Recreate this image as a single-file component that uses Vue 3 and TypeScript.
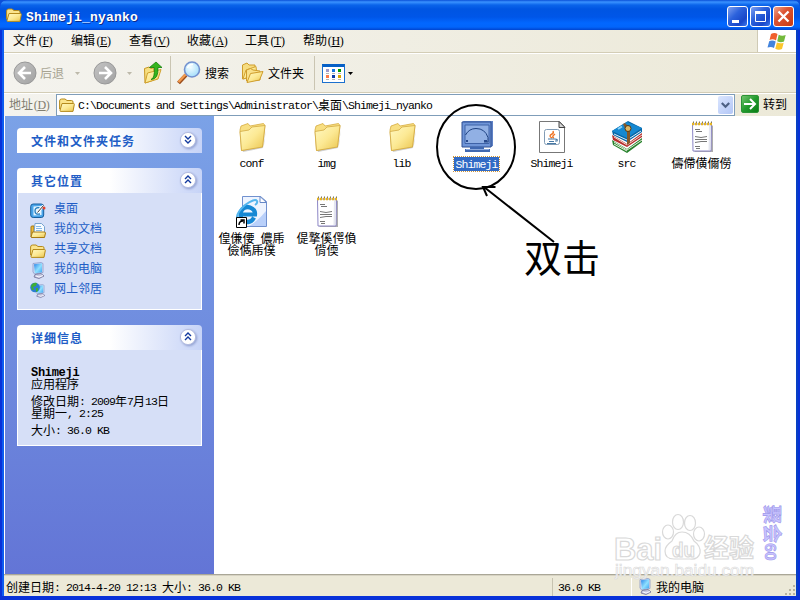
<script setup lang="ts">
import { h, type FunctionalComponent } from 'vue'

// Splits a label into half-width and full-width runs so both keep a fixed pitch.
const Mix: FunctionalComponent<{ t: string }> = (props) =>
  h(
    'span',
    { class: 'mix' },
    (props.t.match(/[\x20-\x7e]+|[^\x20-\x7e]+/g) ?? []).map((run) =>
      h('span', { class: run.charCodeAt(0) < 127 ? 'half' : 'full' }, run),
    ),
  )
Mix.props = ['t']

interface Menu { label: string; key: string }
const menus: Menu[] = [
  { label: '文件', key: 'F' },
  { label: '编辑', key: 'E' },
  { label: '查看', key: 'V' },
  { label: '收藏', key: 'A' },
  { label: '工具', key: 'T' },
  { label: '帮助', key: 'H' },
]

interface Place { label: string; icon: string }
const places: Place[] = [
  { label: '桌面', icon: 'desktop' },
  { label: '我的文档', icon: 'docs' },
  { label: '共享文档', icon: 'shared' },
  { label: '我的电脑', icon: 'computer' },
  { label: '网上邻居', icon: 'network' },
]

interface FileItem { lines: string[]; icon: string; selected?: boolean }
const files: FileItem[] = [
  { lines: ['conf'], icon: 'folder' },
  { lines: ['img'], icon: 'folder' },
  { lines: ['lib'], icon: 'folder' },
  { lines: ['Shimeji'], icon: 'app', selected: true },
  { lines: ['Shimeji'], icon: 'jar' },
  { lines: ['src'], icon: 'rar' },
  { lines: ['儔僀僙儞僗'], icon: 'note' },
  { lines: ['偟傔偠 儂乕', '儉儁乕僕'], icon: 'link' },
  { lines: ['偍撉傒偔偩', '偝偄'], icon: 'note' },
]
const viewDots = ['#a39ac9', '#1276e0', '#009a00', '#ff7a48', '#0a3aa8', '#d9a400']
</script>

<template>
  <div class="window">
    <svg class="defs" width="0" height="0">
      <defs>
        <linearGradient id="gold" x1="0" y1="0" x2="1" y2="1">
          <stop offset="0" stop-color="#fff9c4" /><stop offset=".5" stop-color="#fce994" /><stop offset="1" stop-color="#eac44c" />
        </linearGradient>
        <linearGradient id="screen" x1="0" y1="0" x2="1" y2="1">
          <stop offset="0" stop-color="#2c83e8" /><stop offset=".55" stop-color="#8fe0ff" /><stop offset="1" stop-color="#3ba3f2" />
        </linearGradient>
        <radialGradient id="lens" cx=".4" cy=".35" r=".7">
          <stop offset="0" stop-color="#f4fdff" /><stop offset="1" stop-color="#a0dcfa" />
        </radialGradient>
        <linearGradient id="grey" x1="0" y1="0" x2="1" y2="1">
          <stop offset="0" stop-color="#c4c4c4" /><stop offset="1" stop-color="#a2a2a2" />
        </linearGradient>
        <symbol id="smallFolder" viewBox="0 0 16 14">
          <path d="M.6 11V3q0-2 2-2H6l2 1.500h4.500q1.500 0 1.500 1.500v7z" fill="#fbe48c" stroke="#b58a1c" />
          <path d="M1 12.500 3 5.500H14.500q1 0 .8 1L14 13.400H2q-1.200 0-1-.9z" fill="url(#gold)" stroke="#b58a1c" />
        </symbol>
        <symbol id="computer" viewBox="0 0 16 17">
          <path d="m3 1.500 8-1 2 1v9l-8.500 1.500L3 10z" fill="#d4dcf1" stroke="#7f91c4" stroke-width=".7" />
          <path d="m4 2.300 8-1v9l-7.200 1z" fill="url(#screen)" />
          <path d="m5 12.500 6-1 3 2.500-5 2.500-5-1.500z" fill="#c7c8e0" stroke="#6e6f96" stroke-width=".8" />
          <path d="m6 14 3 1 4-1.500" stroke="#f7f7ff" fill="none" />
        </symbol>
      </defs>
    </svg>

    <header class="title">
      <svg width="16" height="14"><use href="#smallFolder" /></svg>
      <h1><Mix t="Shimeji_nyanko" /></h1>
      <div class="controls">
        <span class="ctl"><svg width="19" height="19"><path d="M4 13h7v3H4z" fill="#fff" /></svg></span>
        <span class="ctl"><svg width="19" height="19"><path d="M4.500 5.500h10v9h-10z" fill="none" stroke="#fff" /><path d="M4 4h11v3H4z" fill="#fff" /></svg></span>
        <span class="ctl close"><svg width="19" height="19"><path d="m4.500 4.500 10 10m0-10-10 10" stroke="#fff" stroke-width="2.300" /></svg></span>
      </div>
    </header>

    <div class="frame">
      <nav class="menubar">
        <span v-for="m in menus" :key="m.key" class="menu">{{ m.label }}<span class="key">(<u>{{ m.key }}</u>)</span></span>
        <span class="flag">
          <svg width="20" height="19" viewBox="0 0 20 19">
            <path d="M4 2q3.500-2 6.500 0L9 8.500q-3-2-6.500-.5z" fill="#f0602c" />
            <path d="M11.700 2.800q3.300 1.700 7 .2L17 9.500q-3.300 1.500-6.800-.2z" fill="#73b93c" />
            <path d="M2.200 9.200q3-1.600 6.500.3L7 16Q4 14 .5 15.600z" fill="#4384dd" />
            <path d="M9.900 10.500q3.300 1.500 6.800.2L15 17q-3.500 1.500-6.700-.3z" fill="#fbc62c" />
          </svg>
        </span>
      </nav>

      <div class="toolbar">
        <svg class="back" width="24" height="24"><circle cx="12" cy="12" r="11" fill="url(#grey)" stroke="#989898" /><path d="m12 6-6 6 6 6M6.500 12H18" fill="none" stroke="#fff" stroke-width="2.600" /></svg>
        <span class="dim">后退</span>
        <svg class="tri tri1" width="5" height="3"><path d="M0 0h5L2.500 3z" fill="#bdb9aa" /></svg>
        <svg width="24" height="24"><circle cx="12" cy="12" r="11" fill="url(#grey)" stroke="#989898" /><path d="m12 6 6 6-6 6M17.500 12H6" fill="none" stroke="#fff" stroke-width="2.600" /></svg>
        <svg class="tri tri2" width="5" height="3"><path d="M0 0h5L2.500 3z" fill="#bdb9aa" /></svg>
        <svg class="up" width="20" height="24">
          <path d="M1.500 7.500 6 6l2 1.500 3-1V19l-9 3z" fill="#f7df80" stroke="#c89724" />
          <path d="m2 22 2.500-10L18 8.500 15 18z" fill="url(#gold)" stroke="#d0a12d" />
          <path d="M8 18.500q4-1 3.300-12H6.500L13 1l6 5.500h-4q.5 12-7 12z" fill="#35b51e" stroke="#16800d" stroke-width=".8" />
        </svg>
        <i class="sep" />
        <svg class="search" width="24" height="24">
          <path d="m1.500 22 7.500-8" stroke="#9b4d1b" stroke-width="4" /><path d="m1.500 21 7.500-8" stroke="#f29a4e" stroke-width="2.500" />
          <circle cx="15" cy="8.500" r="7.500" fill="url(#lens)" stroke="#7391cf" stroke-width="1.600" />
          <path d="M10.500 7q1.500-4 5.500-3.500" stroke="#fff" fill="none" stroke-width="1.500" />
        </svg>
        <span>搜索</span>
        <svg class="folders" width="24" height="22">
          <path d="M1.500 17V3l4.500-2 2 2h6v12z" fill="#f6dc80" stroke="#cf9d2c" />
          <path d="m2 17 3-9 10-3.500 1 8z" fill="url(#gold)" stroke="#d3a334" />
          <path d="M5.500 19V8l4-1.500L12 8l7 1v9z" fill="#f9e18a" stroke="#cf9d2c" />
          <path d="m6 20.500 3.500-9L22 9.500 18.500 18z" fill="url(#gold)" stroke="#cf9d2c" />
        </svg>
        <span>文件夹</span>
        <i class="sep sep2" />
        <span class="view"><i v-for="c in viewDots" :key="c" :style="{ background: c }" /></span>
        <svg class="tri dark" width="5" height="3"><path d="M0 0h5L2.500 3z" fill="#000" /></svg>
      </div>

      <div class="address">
        <span class="addrlabel">地址<span class="key">(<u>D</u>)</span></span>
        <div class="field">
          <svg width="16" height="14"><use href="#smallFolder" /></svg>
          <Mix t="C:\Documents and Settings\Administrator\桌面\Shimeji_nyanko" />
          <span class="drop"><svg width="9" height="7"><path d="m.8 1 3.700 3.700L8.200 1" fill="none" stroke="#4d6185" stroke-width="2.200" /></svg></span>
        </div>
        <span class="go"><svg width="16" height="16"><path d="M2 8h11M8 3l5 5-5 5" stroke="#fff" stroke-width="2" fill="none" /></svg></span>
        <span class="golabel">转到</span>
      </div>

      <main class="body">
        <aside class="side">
          <section class="panel">
            <h2><span>文件和文件夹任务</span>
              <svg width="20" height="20" class="chev"><circle cx="10" cy="10" r="7.600" fill="#fff" stroke="#b4bde0" /><path d="m7 6 3 3 3-3M7 10l3 3 3-3" fill="none" stroke="#12399e" stroke-width="1.400" /></svg>
            </h2>
          </section>
          <section class="panel">
            <h2><span>其它位置</span>
              <svg width="20" height="20" class="chev"><circle cx="10" cy="10" r="7.600" fill="#fff" stroke="#b4bde0" /><path d="m7 9 3-3 3 3M7 13l3-3 3 3" fill="none" stroke="#12399e" stroke-width="1.400" /></svg>
            </h2>
            <ul>
              <li v-for="p in places" :key="p.label">
                <svg width="16" height="17" viewBox="0 0 16 17">
                  <template v-if="p.icon === 'desktop'">
                    <rect x=".7" y="2" width="13" height="13.500" rx="2.500" fill="#4aa5ea" stroke="#175f9e" />
                    <path d="m3.500 4.500 8-.5v9l-8 .5z" fill="#e4f5ff" /><path d="M9.500 5.800Q5 5 5 9t5 3" fill="none" stroke="#1f78ba" stroke-width="1.300" />
                    <path d="m7.500 10.500 6-7" stroke="#fff" stroke-width="2.500" /><path d="m7.500 10.500 6-7" stroke="#3a3a3a" /><circle cx="14" cy="6" r="1.500" fill="#e4402b" />
                  </template>
                  <template v-else-if="p.icon === 'docs'">
                    <path d="M1 15V5q0-1 1-1h2v8h10v3z" fill="#e9b93f" stroke="#a77a13" />
                    <path d="M5 1.500h6.500l3 3V11H4z" fill="#f7fcff" stroke="#77a3cf" /><path d="M6 4.500h5M6 6.500h6M6 8.500h6" stroke="#86b8e8" />
                    <path d="m1 15 1.500-5h11.700q1.300 0 1.300 1l-1 4.500H2z" fill="url(#gold)" stroke="#a77a13" />
                  </template>
                  <use v-else-if="p.icon === 'shared'" href="#smallFolder" x="0" y="2" width="16" height="14" />
                  <use v-else-if="p.icon === 'computer'" href="#computer" width="16" height="17" />
                  <template v-else>
                    <use href="#computer" x="3.500" y="1" width="13" height="16" />
                    <circle cx="5" cy="5.500" r="4.800" fill="#2b7ed1" /><path d="M1 4q2-4 6-3l-1 3-3 1 1 3-2 0z" fill="#3fae35" /><path d="m6 6 2 0 0 3-2 1z" fill="#3fae35" />
                  </template>
                </svg>
                <a>{{ p.label }}</a>
              </li>
            </ul>
          </section>
          <section class="panel">
            <h2><span>详细信息</span>
              <svg width="20" height="20" class="chev"><circle cx="10" cy="10" r="7.600" fill="#fff" stroke="#b4bde0" /><path d="m7 9 3-3 3 3M7 13l3-3 3 3" fill="none" stroke="#12399e" stroke-width="1.400" /></svg>
            </h2>
            <div class="details">
              <p><b><Mix t="Shimeji" /></b><br />应用程序</p>
              <p><Mix t="修改日期: 2009年7月13日" /><br /><Mix t="星期一, 2:25" /></p>
              <p><Mix t="大小: 36.0 KB" /></p>
            </div>
          </section>
        </aside>

        <div class="files">
          <figure v-for="(f, i) in files" :key="i" :class="{ selected: f.selected }">
            <svg width="32" height="34" viewBox="0 0 32 34">
              <template v-if="f.icon === 'folder'">
                <path d="m6 28 1 4 20-4L30 8l-2 17z" fill="#888" opacity=".4" />
                <path d="M4 10 5 6l7-2.500L14 6l13.500-2.500 1.500 2-2.500 21-21 4z" fill="#f8df82" stroke="#d5ab3f" stroke-width=".8" />
                <path d="M4 11.500 13 10l3-3 13-1.500-2.500 21.500-21 3.500z" fill="url(#gold)" stroke="#d2a942" stroke-width=".8" />
              </template>
              <template v-else-if="f.icon === 'app'">
                <path d="m1 3 1.500-2h30v24l-2 2H3l-2-2z" fill="#5f82c6" />
                <path d="M1 2h29v25H1z" fill="#6f95d8" stroke="#2e4f92" /><path d="M4 5h24v18.500H4z" fill="#91b0e4" stroke="#3e62a7" />
                <path d="M4.500 15Q8 8.500 15 8.500q9 0 12 9v4.500h-4" fill="none" stroke="#1f4282" />
                <path d="M5 20h2v2H5zm18 0h3v2h-3z" fill="#28498c" />
                <path d="M9 27h14v2H9zM4 29h25v3H4z" fill="#4068b1" /><path d="M5 29.500h23" stroke="#8daadd" />
              </template>
              <template v-else-if="f.icon === 'jar'">
                <path d="M3.500 1.500h20l5 5v26h-25z" fill="#fff" stroke="#777" /><path d="M23 1.500v6h6z" fill="#d6d6d6" stroke="#444" />
                <rect x="8.500" y="9.500" width="15" height="15" rx="2" fill="#fff" stroke="#819bb5" />
                <path d="M16 18q-4-2 0-4 2-1 1-3M18 18q-3-1 1-4" fill="none" stroke="#f07525" stroke-width="1.400" />
                <path d="M12 19h7q3 0 2 2l-2 0M13 21.500h5M11 23.500h9" fill="none" stroke="#4679a5" stroke-width="1.200" />
              </template>
              <template v-else-if="f.icon === 'rar'">
                <path d="m1 20 15 9 15-11v4L16 33 2 25z" fill="#27822d" /><path d="m3 22 13 8 15-10M3 24l13 7" fill="none" stroke="#e8f0dc" />
                <path d="m1 15 15 9 15-11v4L16 27 2 20z" fill="#b72e2c" /><path d="m3 17 13 8 15-10" fill="none" stroke="#f2dad0" />
                <path d="M1 11 17 1l14 7v4L16 22 2 15z" fill="#0866a6" /><path d="M1 11 16 2l15 6-15 10z" fill="#1688d1" /><path d="m3 14 13 6 14-9" fill="none" stroke="#dceefb" />
                <path d="m12 4 2-1 5 5v15l-3 2V12z" fill="#855829" /><circle cx="17" cy="8.500" r="3" fill="#dcb767" stroke="#573812" /><path d="m7 9 4-2.500" stroke="#8dd5fa" stroke-width="2" />
              </template>
              <template v-else-if="f.icon === 'note'">
                <path d="m7 30 2 2h18V5" fill="#777" opacity=".6" />
                <path d="M6.500 4h19L25 31H7z" fill="#fff" stroke="#8c86c6" /><path d="m24 5-.5 25" stroke="#e4e6f0" stroke-width="2" />
                <path d="M7 3h19" stroke="#6b6b6b" stroke-width="3" stroke-dasharray="1 2" /><path d="M6 4h20" stroke="#e4b423" stroke-width="2.400" stroke-dasharray="2 1" />
                <path d="M9 9.500h5m-4 2h6m-7 5 6 1 6-1m-12 3h5l7 0m-12 3 6-1 6 0M9 26.500h5m-4 2h4" fill="none" stroke="#666" stroke-width=".9" />
              </template>
              <template v-else>
                <path d="M6.500 1.500h18l6 5v25h-24z" fill="#eef4ff" stroke="#7191cf" /><path d="M13 31h17V16q-7 9-17 15z" fill="#b9d0fa" /><path d="M24 1.500v6h6.500z" fill="#fff" stroke="#6688c7" />
                <path d="M18 22.500q-3 6-9 4t-4-10q3-6 9-4 5.500 2 5 7H6" fill="none" stroke="#1688d4" stroke-width="4.200" />
                <path d="M1 24Q0 18 9 10q10-7 12-4 1 2-2 4" fill="none" stroke="#55b6ee" stroke-width="2" />
                <path d="M.5 22.500h10v10H.5z" fill="#fff" stroke="#000" /><path d="M3 30q0-4 4-4M4.500 25H8v3.500" fill="none" stroke="#000" stroke-width="1.500" />
              </template>
            </svg>
            <figcaption><span v-for="l in f.lines" :key="l" class="line"><Mix :t="l" /></span></figcaption>
          </figure>
        </div>
      </main>

      <footer class="status">
        <span class="made"><Mix t="创建日期: 2014-4-20 12:13 大小: 36.0 KB" /></span>
        <span class="size"><Mix t="36.0 KB" /></span>
        <span class="zone"><svg width="16" height="17"><use href="#computer" /></svg>我的电脑</span>
        <svg class="grip" width="12" height="12"><path d="M9 1h2v2H9zM5 5h2v2H5zm4 0h2v2H9zM1 9h2v2H1zm4 0h2v2H5zm4 0h2v2H9z" fill="#b8b4a0" /></svg>
      </footer>
    </div>

    <svg class="notes" width="800" height="600">
      <ellipse cx="476" cy="147" rx="39" ry="42" fill="none" stroke="#000" stroke-width="2" />
      <path d="m554 242-70-55m11.500 0H483l4 9" fill="none" stroke="#000" stroke-width="2" />
      <text x="524" y="272" class="call">双击</text>
      <g class="mark">
        <text x="614" y="560" class="bai" textLength="48" lengthAdjust="spacingAndGlyphs">Bai</text>
        <ellipse cx="668" cy="532" rx="5.500" ry="7" /><ellipse cx="678" cy="522" rx="5.500" ry="7.500" /><ellipse cx="690" cy="523" rx="5.500" ry="7.500" /><ellipse cx="699" cy="534" rx="5.500" ry="7" />
        <path d="M682 532q8 0 12 9 7 5 6 12-2 7-10 6h-16q-9 0-9-8 0-5 7-10 3-9 10-9z" />
        <text x="672" y="557" class="du" textLength="23" lengthAdjust="spacingAndGlyphs">du</text>
        <text x="704" y="557" class="exp">经验</text>
        <text x="615" y="576" class="site" textLength="139" lengthAdjust="spacingAndGlyphs">jingyan.baidu.com</text>
      </g>
      <text transform="translate(765 505) rotate(90)" class="stamp">聚会<tspan font-size="15">60</tspan></text>
    </svg>
  </div>
</template>

<style>
body { margin: 0; overflow: hidden; background: #0b4fd8; }
.mix { white-space: pre; }
.mix .half { font-family: "Liberation Mono", monospace; font-size: 11.5px; letter-spacing: -0.9px; line-height: 0; vertical-align: 1px; }
</style>

<style scoped>
.window { position: relative; width: 800px; height: 600px; overflow: hidden; box-sizing: border-box; display: flex; flex-direction: column; border-radius: 7px 7px 0 0; background: #0831d9; font: 12px/12px "Noto Sans CJK SC", "Noto Sans CJK TC", sans-serif; color: #000; }
.defs { position: absolute; }
.title { height: 30px; box-sizing: border-box; display: flex; align-items: center; padding: 3px 6px 0 6px; background: linear-gradient(#0a50d8 0, #3a92ff 2px, #0a64ea 5px, #0055e2 9px, #0056e8 17px, #0267ff 23px, #0265fb 27px, #0044cf 30px); }
.title > svg { margin-top: -3px; }
.title h1 { flex: 1; margin: 1px 0 0 4px; font-size: 12px; color: #fff; text-shadow: 1px 1px #0b2a8a; }
.title h1 :deep(.half) { font-size: 13px; letter-spacing: .2px; }
.controls { display: flex; gap: 2px; }
.ctl { width: 19px; height: 19px; border: 1px solid #fff; border-radius: 3px; background: linear-gradient(135deg, #7fa0f0, #2c62dc 40%, #1846c9 75%, #3b78ee); }
.ctl svg { display: block; }
.close { background: linear-gradient(135deg, #f0a48c, #dc5433 40%, #c83a12); }
.frame { flex: 1; min-height: 0; display: flex; flex-direction: column; margin: 0 4px 4px; background: #ece9d8; box-shadow: -2px 0 #0d5cf0, 2px 0 #0840c4; }
.key { font-family: "Liberation Serif", serif; font-size: 12px; line-height: 0; display: inline-block; width: 17px; text-align: center; white-space: nowrap; letter-spacing: -.4px; }
.menubar { height: 22px; display: flex; padding-left: 9px; gap: 16px; line-height: 20px; background: linear-gradient(90deg, #f4f3ee, #ece9d8); border-bottom: 1px solid #d3cdb6; }
.menu { width: 42px; white-space: nowrap; }
.flag { margin-left: auto; width: 38px; height: 22px; background: #fff; border-left: 1px solid #cfcab5; display: flex; align-items: center; justify-content: center; }
.toolbar { height: 38px; border-top: 1px solid #fff; border-bottom: 1px solid #d3cdb6; display: flex; align-items: center; padding-left: 9px; background: linear-gradient(90deg, #f4f3ee, #ece9d8); }
.toolbar svg { flex: none; }
.dim { color: #a7a392; margin-left: 3px; }
.tri1 { margin: 0 13px 0 11px; }
.tri2 { margin: 0 11px 0 10px; }
.sep { width: 1px; height: 34px; margin: 0 6px 0 7px; background: #cac5b2; }
.search { margin-right: 4px; }
.folders { margin: 0 3px 0 12px; }
.sep2 { margin: 0 7px 0 10px; }
.view { box-sizing: border-box; width: 23px; height: 19px; display: grid; grid-template-columns: repeat(3, 3px); grid-auto-rows: 3px; gap: 3px; padding: 2px 3px; background: #fff; border: 1px solid #1b70ce; border-top: 3px solid #0660c6; }
.view i::after { content: ""; display: block; height: 1px; margin-top: 4px; background: #b5b5b5; }
.dark { margin-left: 3px; }
.address { height: 22px; border-top: 1px solid #fff; display: flex; background: linear-gradient(90deg, #f4f3ee, #ece9d8); }
.addrlabel { width: 47px; padding-left: 5px; line-height: 19px; color: #817e70; white-space: nowrap; }
.field { width: 679px; box-sizing: border-box; height: 22px; border: 1px solid #7f9db9; background: #fff; display: flex; align-items: center; padding: 0 1px 0 2px; gap: 3px; }
.drop { margin-left: auto; width: 15px; height: 18px; display: flex; align-items: center; justify-content: center; border-radius: 2px; background: linear-gradient(135deg, #dbe6ff, #b2c6f6); }
.go { width: 16px; height: 16px; margin: 1px 0 0 6px; border: 1px solid #2b9336; border-radius: 2px; background: linear-gradient(135deg, #71c46e, #239a2d 50%, #097f16); }
.go svg { display: block; }
.golabel { margin-left: 4px; line-height: 19px; }
.body { flex: 1; min-height: 0; display: flex; background: #fff; }
.side { width: 209px; margin-left: 1px; box-sizing: border-box; padding: 12px; display: flex; flex-direction: column; gap: 15px; background: linear-gradient(#7ba2e7, #6375d6); }
.panel h2 { margin: 0; height: 25px; display: flex; align-items: center; justify-content: space-between; padding: 0 4px 0 14px; font-size: 12px; letter-spacing: 1px; color: #215dc6; background: linear-gradient(90deg, #fff 50%, #c6d3f7); border-radius: 4px 4px 0 0; }
.chev { filter: drop-shadow(1px 1px 1px #8e9dcf); position: relative; top: -1px; }
.panel ul { margin: 0; padding: 6px 0 10px 12px; height: 100px; border: 1px solid #fff; border-top: 0; background: #d6dff7; list-style: none; }
.panel li { height: 20px; display: flex; align-items: center; gap: 8px; color: #215dc6; }
.panel li svg { margin-top: 3px; }
.panel li a { padding-bottom: 3px; }
.details { height: 79px; padding: 16px 0 0 13px; border: 1px solid #fff; border-top: 0; background: #d6dff7; }
.details p { margin: 0 0 5px; white-space: nowrap; }
.details b :deep(.half) { font-size: 12px; letter-spacing: -.3px; }
.files { width: 525px; display: grid; grid-template-columns: repeat(7, 75px); grid-auto-rows: 75px; align-content: start; padding-top: 4px; }
.files figure { margin: 0; display: flex; flex-direction: column; align-items: center; gap: 3px; }
figcaption { display: flex; flex-direction: column; align-items: center; white-space: nowrap; padding: 0 2px; }
.line { display: block; height: 12px; }
.selected figcaption { padding: 1px 1px; background: #316ac5; color: #fff; outline: 1px dotted #ce953a; }
.status { height: 22px; border-top: 1px solid #aaa797; box-sizing: border-box; box-shadow: inset 0 1px #d7d3c3; display: flex; align-items: center; padding: 2px 0 0 2px; }
.made { width: 546px; border-right: 1px solid #c7c3b0; line-height: 18px; }
.size { width: 73px; padding-left: 5px; border-right: 1px solid #fff; line-height: 18px; }
.zone { display: flex; align-items: center; gap: 3px; padding-left: 5px; }
.grip { margin: 6px 0 0 auto; }
.notes { position: absolute; inset: 0; pointer-events: none; }
.call { font-size: 38px; font-family: "Liberation Serif", "Noto Sans CJK SC", serif; }
.mark { fill: #fff; fill-opacity: .85; stroke: #d9d9d9; stroke-width: 1.2; font-family: "Liberation Sans", "Noto Sans CJK SC", sans-serif; font-weight: bold; }
.bai { font-size: 32px; }
.du { font-size: 21px; }
.exp { font-size: 25px; }
.site { font-size: 16px; font-weight: 400; stroke-width: .6; }
.stamp { font: bold 19px "Noto Sans CJK SC", sans-serif; fill: #c9c4ff; stroke: #9d96ea; stroke-width: .6; }
</style>
